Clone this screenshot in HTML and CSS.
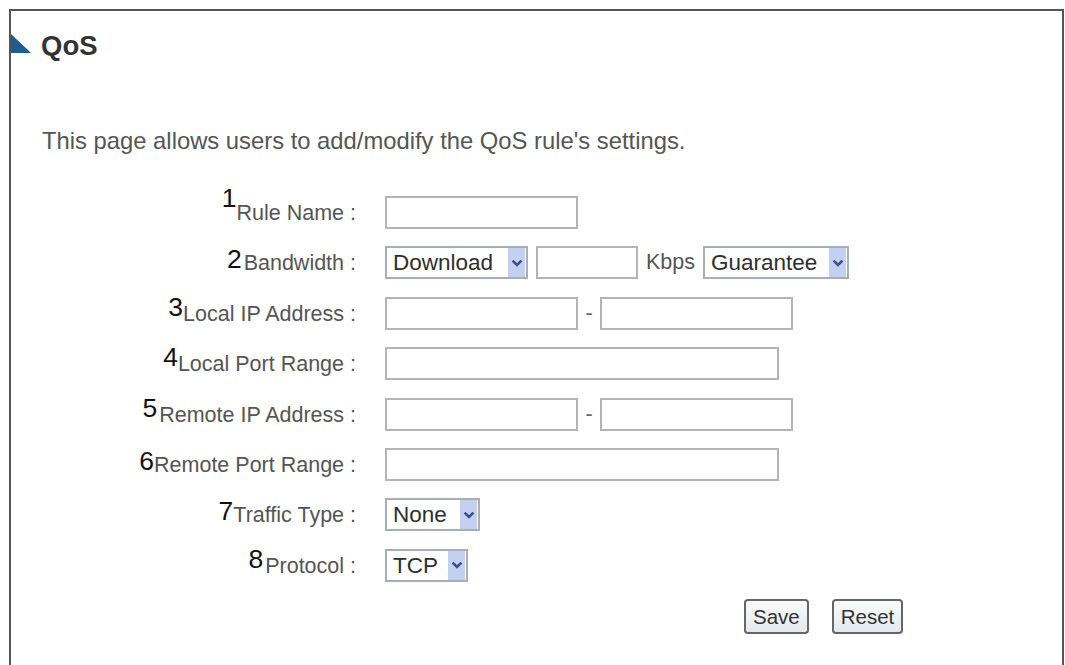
FILE: index.html
```html
<!DOCTYPE html>
<html lang="en">
<head>
<meta charset="utf-8">
<title>QoS</title>
<link rel="stylesheet" href="styles.css">
</head>
<body>
<div class="panel">
  <div class="head">
    <svg class="tri" width="21" height="20" viewBox="0 0 21 20"><polygon points="0,0 0,20 21,20" fill="#1f5b8c"/></svg>
    <h1 class="title">QoS</h1>
  </div>
  <p class="intro">This page allows users to add/modify the QoS rule's settings.</p>
  <div class="form">
    <div class="lbl"><span class="num sup">1</span>Rule Name :</div>
    <div class="ctl"><input class="txt w-md" type="text"></div>

    <div class="lbl"><span class="num low gap">2</span>Bandwidth :</div>
    <div class="ctl row-gap">
      <span class="sel w-dl"><select><option>Download</option></select><span class="arrow"><svg width="12" height="8" viewBox="0 0 12 8"><path d="M1.6 1.6 L6 6 L10.4 1.6" fill="none" stroke="#3b4f8e" stroke-width="2.6"/></svg></span></span>
      <input class="txt w-sm" type="text">
      <span class="unit">Kbps</span>
      <span class="sel w-gu"><select><option>Guarantee</option></select><span class="arrow"><svg width="12" height="8" viewBox="0 0 12 8"><path d="M1.6 1.6 L6 6 L10.4 1.6" fill="none" stroke="#3b4f8e" stroke-width="2.6"/></svg></span></span>
    </div>

    <div class="lbl"><span class="num mid">3</span>Local IP Address :</div>
    <div class="ctl"><input class="txt w-md" type="text"><span class="dash">-</span><input class="txt w-md" type="text"></div>

    <div class="lbl"><span class="num mid">4</span>Local Port Range :</div>
    <div class="ctl"><input class="txt w-lg" type="text"></div>

    <div class="lbl"><span class="num mid gap">5</span>Remote IP Address :</div>
    <div class="ctl"><input class="txt w-md" type="text"><span class="dash">-</span><input class="txt w-md" type="text"></div>

    <div class="lbl"><span class="num low">6</span>Remote Port Range :</div>
    <div class="ctl"><input class="txt w-lg" type="text"></div>

    <div class="lbl"><span class="num low">7</span>Traffic Type :</div>
    <div class="ctl">
      <span class="sel w-none"><select><option>None</option></select><span class="arrow"><svg width="12" height="8" viewBox="0 0 12 8"><path d="M1.6 1.6 L6 6 L10.4 1.6" fill="none" stroke="#3b4f8e" stroke-width="2.6"/></svg></span></span>
    </div>

    <div class="lbl"><span class="num mid gap">8</span>Protocol :</div>
    <div class="ctl">
      <span class="sel w-tcp"><select><option>TCP</option></select><span class="arrow"><svg width="12" height="8" viewBox="0 0 12 8"><path d="M1.6 1.6 L6 6 L10.4 1.6" fill="none" stroke="#3b4f8e" stroke-width="2.6"/></svg></span></span>
    </div>

    <div class="lbl"></div>
    <div class="ctl buttons">
      <button class="btn" type="button">Save</button>
      <button class="btn" type="button">Reset</button>
    </div>
  </div>
</div>
</body>
</html>
```
FILE: styles.css
```css
html, body {
  margin: 0;
  padding: 0;
  background: #fff;
}
body {
  font-family: "Liberation Sans", Arial, sans-serif;
  color: #555;
}
.panel {
  box-sizing: border-box;
  margin: 9px 1px 0 9px;
  height: 656px;
  border: 2px solid #555;
  border-bottom: none;
  background: #fff;
  overflow: hidden;
}
.head {
  display: flex;
  align-items: flex-start;
  margin-top: 22px;
  height: 20px;
}
.tri {
  display: block;
  margin-left: -1px;
  flex: none;
}
.title {
  margin: 0 0 0 10px;
  padding-top: 3px;
  font-size: 27.5px;
  line-height: 20px;
  font-weight: bold;
  color: #333;
}
.intro {
  margin: 74px 0 0 31px;
  font-size: 23.8px;
  line-height: 28px;
  color: #555;
}
.form {
  display: grid;
  grid-template-columns: 345px auto;
  column-gap: 29px;
  row-gap: 17.4px;
  grid-auto-rows: 33px;
  margin-top: 41px;
}
.lbl {
  text-align: right;
  font-size: 21.5px;
  line-height: 33px;
  padding-top: 1px;
  color: #555;
  white-space: nowrap;
}
.num {
  font-size: 26.5px;
  line-height: 0;
  color: #111;
}
.num.sup { vertical-align: 13px; }
.num.mid { vertical-align: 5px; }
.num.low { vertical-align: 2px; }
.num.gap { margin-right: 2px; }
.ctl {
  display: flex;
  align-items: center;
}
.row-gap {
  gap: 8px;
}
.txt {
  box-sizing: border-box;
  height: 33px;
  margin: 0;
  padding: 0 4px;
  border: 2px solid #b4b4b4;
  background: #fff;
  font-family: inherit;
  font-size: 20px;
  outline: none;
}
.w-md { width: 193px; }
.w-lg { width: 394px; }
.w-sm { width: 102px; }
.dash {
  width: 22px;
  text-align: center;
  font-size: 21.5px;
  color: #666;
}
.unit {
  font-size: 21.5px;
  color: #555;
}
.sel {
  position: relative;
  box-sizing: border-box;
  display: inline-block;
  height: 33px;
  border: 2px solid #a6adbd;
  background: #fff;
}
.sel select {
  -webkit-appearance: none;
  appearance: none;
  display: block;
  box-sizing: border-box;
  width: 100%;
  height: 100%;
  margin: 0;
  padding: 0 0 0 6px;
  border: 0;
  background: transparent;
  font-family: inherit;
  font-size: 22.5px;
  color: #2e2e2e;
  outline: none;
}
.sel .arrow {
  position: absolute;
  top: 0;
  bottom: 0;
  right: 1px;
  width: 17px;
  background: #c4d0f0;
  display: flex;
  align-items: center;
  justify-content: center;
}
.arrow svg { display: block; }
.w-dl { width: 143px; }
.w-gu { width: 146px; }
.w-none { width: 95px; }
.w-tcp { width: 83px; }
.buttons {
  gap: 23px;
  padding-left: 359px;
  height: 35px;
  align-self: start;
}
.btn {
  box-sizing: border-box;
  height: 35px;
  margin: 0;
  padding: 0 7px;
  border: 2px solid #666;
  border-radius: 4px;
  background: linear-gradient(#fbfbfb, #e4e8ee);
  font-family: inherit;
  font-size: 20.5px;
  color: #333;
}
```
